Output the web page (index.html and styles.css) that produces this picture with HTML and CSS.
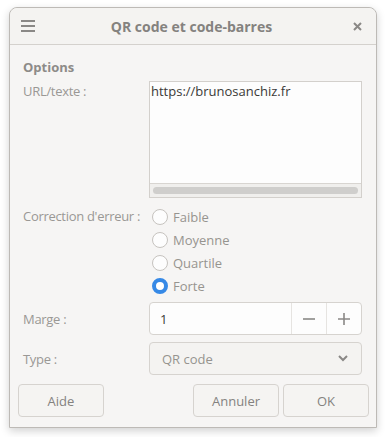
FILE: index.html
```html
<!DOCTYPE html>
<html>
<head>
    <title>QR code et code-barres</title>
    <link rel="stylesheet" href="styles.css">
</head>
<body>
    <div class="window">
        <div class="titlebar">
            <span class="menu-icon">
                <svg width="14" height="12" viewBox="0 0 14 12"><path d="M0 1h14M0 6h14M0 11h14" stroke="#8a8886" stroke-width="2"/></svg>
            </span>
            <h1>QR code et code-barres</h1>
            <span class="close-icon">
                <svg width="9" height="9" viewBox="0 0 9 9"><path d="M1 1l7 7M8 1l-7 7" stroke="#8a8886" stroke-width="2"/></svg>
            </span>
        </div>

        <div class="content">
            <div class="section-title">Options</div>

            <div class="form-row">
                <label class="field-label">URL/texte :</label>
                <div class="text-area">
                    <div class="text-value">https://brunosanchiz.fr</div>
                    <div class="h-scroll"><div class="thumb"></div></div>
                </div>
            </div>

            <div class="form-row radios-row">
                <label class="field-label">Correction d'erreur :</label>
                <div class="radio-list">
                    <div class="radio"><span class="dot"></span>Faible</div>
                    <div class="radio"><span class="dot"></span>Moyenne</div>
                    <div class="radio"><span class="dot"></span>Quartile</div>
                    <div class="radio checked"><span class="dot"></span>Forte</div>
                </div>
            </div>

            <div class="form-row centered marge-row">
                <label class="field-label">Marge :</label>
                <div class="spin-box">
                    <span class="spin-value">1</span>
                    <span class="spin-btn">
                        <svg width="12" height="12" viewBox="0 0 12 12"><path d="M0 6h12" stroke="#8a8886" stroke-width="1.6"/></svg>
                    </span>
                    <span class="spin-btn">
                        <svg width="12" height="12" viewBox="0 0 12 12"><path d="M0 6h12M6 0v12" stroke="#8a8886" stroke-width="1.6"/></svg>
                    </span>
                </div>
            </div>

            <div class="form-row centered type-row">
                <label class="field-label">Type :</label>
                <div class="combo">
                    <span>QR code</span>
                    <svg width="10" height="7" viewBox="0 0 10 7"><path d="M1 1l4 4 4-4" fill="none" stroke="#8a8886" stroke-width="2"/></svg>
                </div>
            </div>
        </div>

        <div class="actions">
            <button class="btn">Aide</button>
            <div class="spacer"></div>
            <button class="btn">Annuler</button>
            <button class="btn">OK</button>
        </div>
    </div>
</body>
</html>
```

FILE: styles.css
```css
* {
    margin: 0;
    padding: 0;
    box-sizing: border-box;
}

body {
    font-family: 'Open Sans', 'Noto Sans', sans-serif;
    font-size: 13px;
    background: #ffffff;
    padding: 7px 10px 10px 9px;
}

.window {
    width: 368px;
    height: 421px;
    background: #f6f5f4;
    border: 1px solid #bdbab6;
    border-radius: 8px 8px 0 0;
    box-shadow: 0 3px 9px rgba(0, 0, 0, 0.18);
    display: flex;
    flex-direction: column;
}

.titlebar {
    height: 37px;
    display: flex;
    align-items: center;
    border-bottom: 1px solid #d4d1cd;
    padding: 0 14px 0 11px;
    border-radius: 8px 8px 0 0;
    background: #f4f3f1;
    flex-shrink: 0;
}

.menu-icon {
    display: flex;
    width: 14px;
}

.close-icon {
    display: flex;
    width: 14px;
    justify-content: flex-end;
}

.titlebar h1 {
    flex: 1;
    text-align: center;
    font-size: 14px;
    font-weight: 700;
    color: #84827f;
}

.content {
    padding: 13px 14px 0 13px;
    display: flex;
    flex-direction: column;
}

.section-title {
    font-weight: 700;
    color: #8d8b88;
    line-height: 18px;
    margin-bottom: 5px;
}

.form-row {
    display: flex;
    align-items: flex-start;
}

.field-label {
    width: 126px;
    color: #9a9895;
    line-height: 18px;
    padding-top: 1px;
    flex-shrink: 0;
    letter-spacing: -0.3px;
}

.text-area {
    flex: 1;
    height: 117px;
    border: 1px solid #d3d0cc;
    background: #fdfdfd;
    display: flex;
    flex-direction: column;
}

.text-value {
    flex: 1;
    color: #3a3937;
    line-height: 18px;
    padding-left: 1px;
}

.h-scroll {
    height: 14px;
    border-top: 1px solid #d8d5d1;
    background: #f0efed;
    padding: 3px 3px 0;
}

.thumb {
    height: 7px;
    border-radius: 4px;
    background: #cfcecc;
}

.radios-row {
    margin-top: 7px;
}

.radios-row .field-label {
    padding-top: 2px;
}

.radio-list {
    display: flex;
    flex-direction: column;
    padding-left: 3px;
}

.radio {
    display: flex;
    align-items: center;
    height: 23px;
    color: #96948f;
}

.dot {
    width: 16px;
    height: 16px;
    border-radius: 50%;
    border: 1px solid #c6c3bf;
    background: #fdfdfd;
    margin-right: 5px;
}

.radio.checked .dot {
    border: 4px solid #3689e6;
    background: #ffffff;
}

.centered {
    align-items: center;
}

.centered .field-label {
    padding-top: 0;
}

.marge-row {
    margin-top: 5px;
}

.spin-box {
    flex: 1;
    height: 33px;
    display: flex;
    border: 1px solid #d6d3cf;
    border-radius: 4px;
    background: #fdfdfd;
}

.spin-value {
    flex: 1;
    display: flex;
    align-items: center;
    padding-left: 10px;
    color: #3a3937;
}

.spin-btn {
    width: 35px;
    display: flex;
    align-items: center;
    justify-content: center;
    border-left: 1px solid #e6e4e1;
}

.type-row {
    margin-top: 7px;
}

.combo {
    flex: 1;
    height: 33px;
    display: flex;
    align-items: center;
    justify-content: space-between;
    padding: 0 13px 0 12px;
    border: 1px solid #d6d3cf;
    border-radius: 4px;
    background: #f4f3f1;
    color: #96948f;
}

.actions {
    display: flex;
    padding: 9px 7px 0 8px;
    gap: 4px;
}

.spacer {
    flex: 1;
}

.btn {
    width: 86px;
    height: 33px;
    font-family: 'Open Sans', 'Noto Sans', sans-serif;
    font-size: 13px;
    color: #84827f;
    background: #f5f4f2;
    border: 1px solid #d6d3cf;
    border-radius: 4px;
}
```
